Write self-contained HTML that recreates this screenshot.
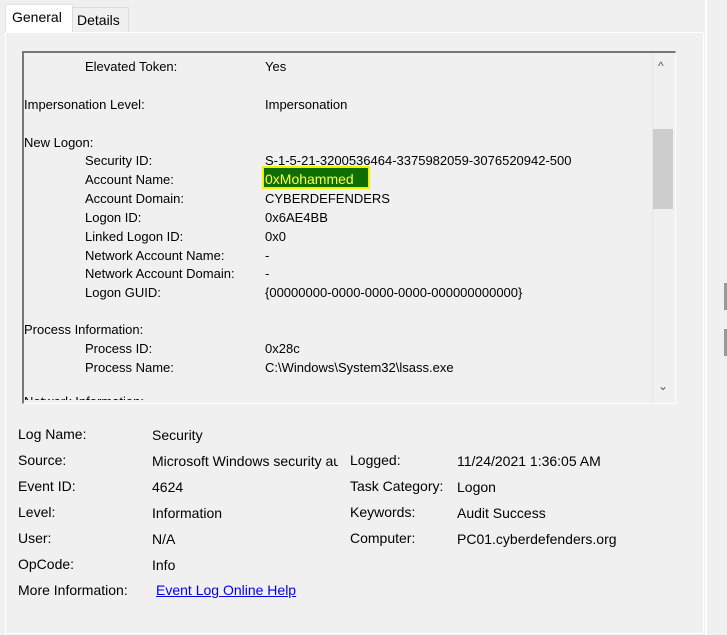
<!DOCTYPE html>
<html><head><style>
body{margin:0;width:727px;height:635px;background:#f0f0f0;font-family:"Liberation Sans",sans-serif;font-size:14px;color:#000;position:relative;overflow:hidden}
.a{position:absolute;white-space:nowrap}
</style></head><body>
<div class="a" style="left:5px;top:4px;width:66px;height:30px;background:#fff;border:1px solid #e3e3e3;border-bottom:none"></div>
<div class="a" style="left:72px;top:7px;width:55px;height:25px;background:#f0f0f0;border:1px solid #dcdcdc;border-bottom:none"></div>
<div class="a" style="left:12px;top:9px;font-size:14px">General</div>
<div class="a" style="left:77px;top:12px;font-size:14px">Details</div>
<div class="a" style="left:5px;top:32px;width:697px;height:600px;border:1px solid #fff;background:#f0f0f0"></div>
<div class="a" style="left:705px;top:0;width:2px;height:635px;background:#fff"></div>
<div class="a" style="left:724px;top:283px;width:3px;height:27px;background:#999"></div>
<div class="a" style="left:724px;top:329px;width:3px;height:27px;background:#999"></div>
<div class="a" style="left:22px;top:51px;width:651px;height:350px;border-top:2px solid #777;border-left:2px solid #777;border-right:1px solid #fff;border-bottom:1px solid #fff;background:#f0f0f0;overflow:hidden">
 <div class="a" style="left:628px;top:0;width:22px;height:350px;background:#f0f0f0;border-left:1px solid #e6e6e6"></div>
 <div class="a" style="left:629px;top:76px;width:20px;height:80px;background:#cdcdcd"></div>
 <div class="a" style="left:634px;top:6px;font-size:12px;color:#555">&#94;</div>
 <div class="a" style="left:634px;top:326px;font-size:12px;color:#555">&#8964;</div>
</div>
<div class="a" style="left:262px;top:166px;width:104px;height:19px;background:#0f6e00;border:2px solid #f0f000"></div>
<div class="a" style="left:24px;top:50px;width:630px;height:350px;overflow:hidden;font-size:13px">
<div class="a" style="left:61px;top:9px">Elevated Token:</div><div class="a" style="left:241px;top:9px">Yes</div>
<div class="a" style="left:0;top:47px">Impersonation Level:</div><div class="a" style="left:241px;top:47px">Impersonation</div>
<div class="a" style="left:0;top:85px">New Logon:</div>
<div class="a" style="left:61px;top:103px">Security ID:</div><div class="a" style="left:241px;top:103px">S-1-5-21-3200536464-3375982059-3076520942-500</div>
<div class="a" style="left:61px;top:122px">Account Name:</div><div class="a" style="left:241px;top:121px;color:#ffff40;font-size:14px">0xMohammed</div>
<div class="a" style="left:61px;top:141px">Account Domain:</div><div class="a" style="left:241px;top:141px">CYBERDEFENDERS</div>
<div class="a" style="left:61px;top:160px">Logon ID:</div><div class="a" style="left:241px;top:160px">0x6AE4BB</div>
<div class="a" style="left:61px;top:179px">Linked Logon ID:</div><div class="a" style="left:241px;top:179px">0x0</div>
<div class="a" style="left:61px;top:198px">Network Account Name:</div><div class="a" style="left:241px;top:198px">-</div>
<div class="a" style="left:61px;top:216px">Network Account Domain:</div><div class="a" style="left:241px;top:216px">-</div>
<div class="a" style="left:61px;top:235px">Logon GUID:</div><div class="a" style="left:241px;top:235px">{00000000-0000-0000-0000-000000000000}</div>
<div class="a" style="left:0;top:272px">Process Information:</div>
<div class="a" style="left:61px;top:291px">Process ID:</div><div class="a" style="left:241px;top:291px">0x28c</div>
<div class="a" style="left:61px;top:310px">Process Name:</div><div class="a" style="left:241px;top:310px">C:\Windows\System32\lsass.exe</div>
<div class="a" style="left:0;top:344px">Network Information:</div>
</div>
<div class="a" style="left:18px;top:426px">Log Name:</div><div class="a" style="left:152px;top:427px">Security</div>
<div class="a" style="left:18px;top:452px">Source:</div><div class="a" style="left:152px;top:453px;width:186px;overflow:hidden">Microsoft Windows security auditing.</div>
<div class="a" style="left:350px;top:452px">Logged:</div><div class="a" style="left:457px;top:453px">11/24/2021 1:36:05 AM</div>
<div class="a" style="left:18px;top:478px">Event ID:</div><div class="a" style="left:152px;top:479px">4624</div>
<div class="a" style="left:350px;top:478px">Task Category:</div><div class="a" style="left:457px;top:479px">Logon</div>
<div class="a" style="left:18px;top:504px">Level:</div><div class="a" style="left:152px;top:505px">Information</div>
<div class="a" style="left:350px;top:504px">Keywords:</div><div class="a" style="left:457px;top:505px">Audit Success</div>
<div class="a" style="left:18px;top:530px">User:</div><div class="a" style="left:152px;top:531px">N/A</div>
<div class="a" style="left:350px;top:530px">Computer:</div><div class="a" style="left:457px;top:531px">PC01.cyberdefenders.org</div>
<div class="a" style="left:18px;top:556px">OpCode:</div><div class="a" style="left:152px;top:557px">Info</div>
<div class="a" style="left:18px;top:582px">More Information:</div><div class="a" style="left:156px;top:582px;color:#0000ee;text-decoration:underline">Event Log Online Help</div>
</body></html>
